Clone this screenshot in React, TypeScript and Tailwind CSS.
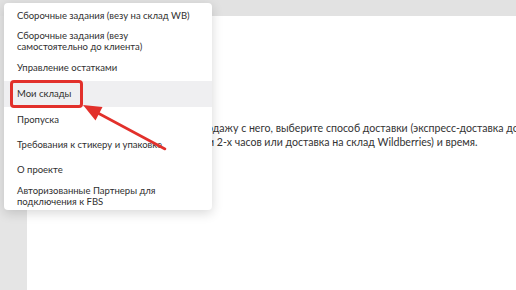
import React from "react";

const items: { lines: string[]; h: string; active?: boolean }[] = [
  { lines: ["Сборочные задания (везу на склад WB)"], h: "h-[26px]" },
  { lines: ["Сборочные задания (везу", "самостоятельно до клиента)"], h: "h-[26px]" },
  { lines: ["Управление остатками"], h: "h-[26px]" },
  { lines: ["Мои склады"], h: "h-[26px]", active: true },
  { lines: ["Пропуска"], h: "h-[26px]" },
  { lines: ["Требования к стикеру и упаковке"], h: "h-[25px]" },
  { lines: ["О проекте"], h: "h-[25px]" },
  { lines: ["Авторизованные Партнеры для", "подключения к FBS"], h: "h-[27px]" },
];

export default function App() {
  return (
    <div
      className="relative w-[516px] h-[290px] overflow-hidden bg-white flex"
      style={{ fontFamily: "Lato, 'Noto Sans', sans-serif" }}
    >
      {/* purple sidebar strip */}
      <div className="w-[4px] flex flex-col">
        <div className="h-[190px] bg-[#8862bb]" />
        <div className="h-[68px] bg-[#b9a2da]" />
        <div className="flex-1 bg-[#3b0b72]" />
      </div>
      <div className="w-[1px] bg-[#f4f4f4]" />
      <div className="flex-1 flex flex-col">
        <div className="h-[16px] bg-[#e2e2e2]" />
        <div className="flex-1 flex">
          <div className="w-[27px] bg-[#e5e5e5]" />
          <div className="flex-1 pl-[180px] pt-[105px] text-[10.6px] leading-[14px] text-[#333333] whitespace-nowrap">
            <div>одажу с него, выберите способ доставки (экспресс-доставка до клиента</div>
            <div className="pl-[1px]">и 2-х часов или доставка на склад Wildberries) и время.</div>
          </div>
        </div>
      </div>

      {/* dropdown menu */}
      <div className="absolute left-[4px] top-[3px] w-[208px] bg-white rounded-[4px] shadow-[0_3px_12px_rgba(0,0,0,0.16)] flex flex-col text-[9.5px] leading-[11px] text-[#2f2f2f]">
        {items.map((it, i) => (
          <div
            key={i}
            className={
              "flex flex-col justify-center pl-[13px] pb-[2px] " +
              it.h +
              " " +
              (it.active ? "bg-[#efeff1]" : "")
            }
          >
            {it.lines.map((l, j) => (
              <span key={j} className="whitespace-nowrap">
                {l}
              </span>
            ))}
          </div>
        ))}
      </div>

      {/* red annotation box */}
      <div className="absolute left-[10px] top-[80px] w-[73px] h-[28px] border-[3px] border-[#e2302b] rounded-[4px]" />

      {/* red arrow */}
      <svg
        className="absolute left-0 top-0"
        width="516"
        height="290"
        viewBox="0 0 516 290"
      >
        <line x1="165" y1="149" x2="96" y2="112" stroke="#e2302b" strokeWidth="2.6" strokeLinecap="round" />
        <polygon points="83,105 102.5,107 95.5,120.5" fill="#e2302b" />
      </svg>
    </div>
  );
}
